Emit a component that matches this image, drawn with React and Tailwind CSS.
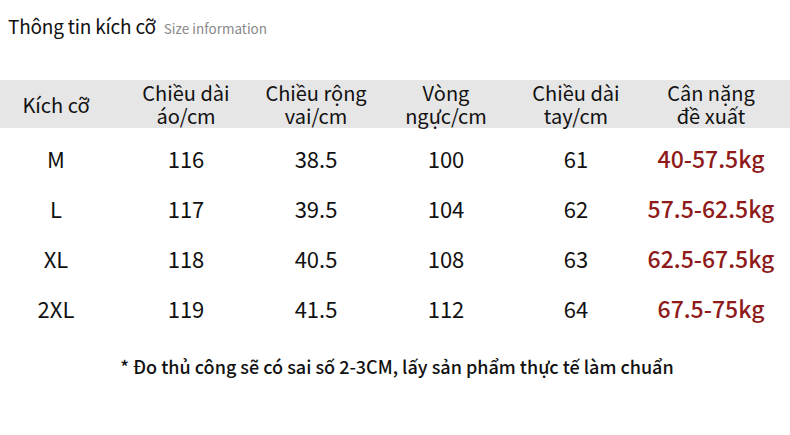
import React from "react";

const cols = "grid grid-cols-[130px_130px_130px_130px_130px_140px] -ml-[9px]";

const rows = [
  ["M", "116", "38.5", "100", "61", "40-57.5kg"],
  ["L", "117", "39.5", "104", "62", "57.5-62.5kg"],
  ["XL", "118", "40.5", "108", "63", "62.5-67.5kg"],
  ["2XL", "119", "41.5", "112", "64", "67.5-75kg"],
];

export default function App() {
  return (
    <div className="w-[790px] h-[435px] bg-white text-[#111] font-['Noto_Sans_CJK_SC','Noto_Sans',sans-serif] overflow-hidden">
      {/* title */}
      <div className="flex items-baseline gap-[8px] pl-[8px] pt-[12px] h-[80px]">
        <span className="text-[19px] leading-[28px] tracking-[-0.2px] text-[#111]">Thông tin kích cỡ</span>
        <span className="text-[13.5px] text-[#888]">Size information</span>
      </div>

      {/* header */}
      <div className={`${cols} bg-[#e6e6e6] h-[48px] items-center text-[20px] leading-[23px] text-center`}>
        <div>Kích cỡ</div>
        <div>Chiều dài<br />áo/cm</div>
        <div>Chiều rộng<br />vai/cm</div>
        <div>Vòng<br />ngực/cm</div>
        <div>Chiều dài<br />tay/cm</div>
        <div>Cân nặng<br />đề xuất</div>
      </div>

      {/* body */}
      <div className="pt-[5px]">
        {rows.map((r) => (
          <div key={r[0]} className={`${cols} h-[50px] items-center text-center text-[22px]`}>
            {r.slice(0, 5).map((c, i) => (
              <div key={i}>{c}</div>
            ))}
            <div className="text-[#8e1a1a] font-medium text-[23px]">{r[5]}</div>
          </div>
        ))}
      </div>

      <div className="text-center text-[18px] font-medium mt-[20px] pl-[4px]">
        * Đo thủ công sẽ có sai số 2-3CM, lấy sản phẩm thực tế làm chuẩn
      </div>
    </div>
  );
}
